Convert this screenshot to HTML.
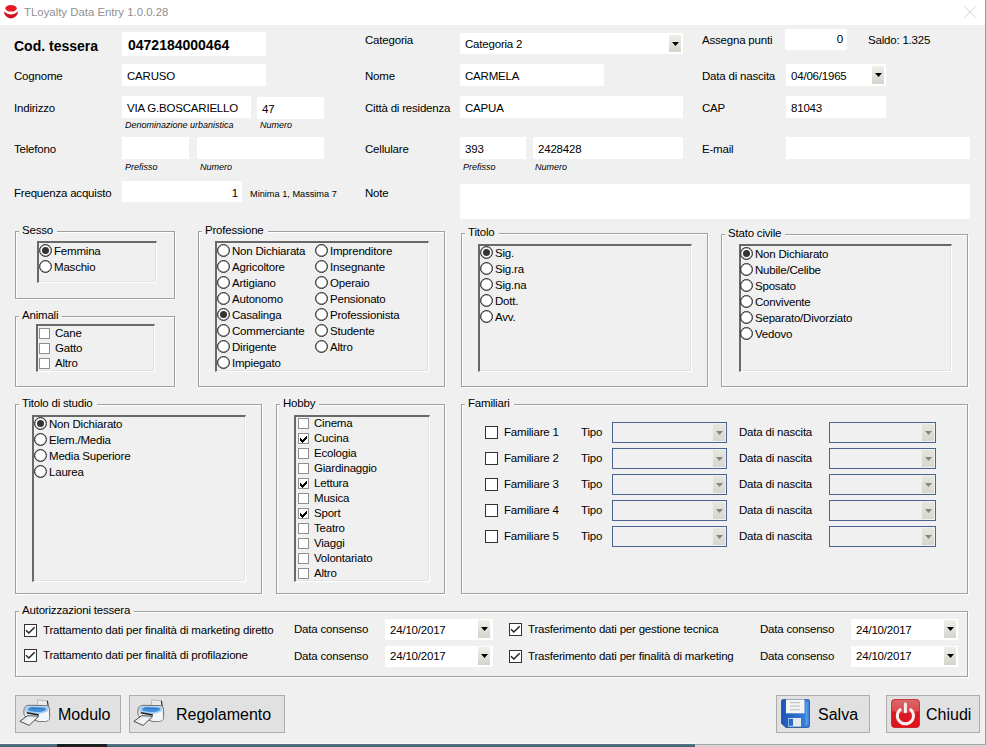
<!DOCTYPE html>
<html><head><meta charset="utf-8">
<style>
*{box-sizing:border-box}
html,body{margin:0;padding:0}
body{width:986px;height:747px;position:relative;overflow:hidden;background:#f0f0f0;font-family:"Liberation Sans",sans-serif;font-size:11.5px;letter-spacing:-0.2px;color:#000}
div,span{position:absolute}
.l{white-space:nowrap;line-height:13px;height:13px}
.tb{background:#fff}
.tb span{left:5px;white-space:nowrap;line-height:13px}
.sm{font-size:9px;font-style:italic;line-height:11px;white-space:nowrap;letter-spacing:0}
.gb{border:1px solid #a0a0a0;box-shadow:1px 1px 0 #fff, inset 1px 1px 0 #fff}
.gl{background:#f0f0f0;white-space:nowrap;line-height:13px;padding:0 4px 0 3px}
.ib{border-top:2px solid #696969;border-left:2px solid #696969;border-right:1px solid #fff;border-bottom:1px solid #fff;box-shadow:inset -1px -1px 0 #e3e3e3}
.rb{width:13px;height:13px;border:1px solid #262626;border-radius:50%;background:#fff;box-shadow:inset 0 0 0 0.5px rgba(0,0,0,0.45)}
.rb.on::after{content:"";position:absolute;left:2px;top:2px;width:7px;height:7px;border-radius:50%;background:#333}
.cb{width:13px;height:13px;border:1px solid #333;background:#fff}
.dd{width:12px;background:linear-gradient(#eeefe9,#d3d5cc)}
.dd::after{content:"";position:absolute;left:3px;top:7px;width:7px;height:4px;background:#000;clip-path:polygon(0 0,100% 0,50% 100%)}
.cb2{width:11px;height:11px;border:1px solid #8f8f8f;background:#fff}
.cb3{width:13px;height:13px;border:1px solid #333;background:#fff}
.cmb{border:1px solid #4a6491;background:#f0f0f0}
.ddd{right:1px;top:1px;width:12px;height:17px;background:linear-gradient(#e4e6df,#d6d8cf)}
.ddd::after{content:"";position:absolute;left:3px;top:7px;width:7px;height:4px;background:#858585;clip-path:polygon(0 0,100% 0,50% 100%)}
.btn{border:1px solid #adadad;background:#e1e1e1;font-size:16px;letter-spacing:0}
.btn span{white-space:nowrap;line-height:19px}
</style></head><body>
<!-- title bar -->
<div style="left:0;top:0;width:986px;height:25px;background:#fff"></div>
<div style="left:985px;top:0;width:1px;height:745px;background:#9a9a9a"></div>
<svg width="14" height="14" viewBox="0 0 14 14" style="position:absolute;left:4px;top:5px">
<ellipse cx="7.05" cy="3.3" rx="5.7" ry="3.3" fill="#e41c22"/>
<path d="M0,6.4 Q7,12.6 14,6.4 A7,7 0 1 1 0,6.4 Z" fill="#d0101c"/>
</svg>
<svg width="12" height="12" style="position:absolute;left:964px;top:6px"><path d="M0.5,0.5 L11.5,11.5 M11.5,0.5 L0.5,11.5" stroke="#d6d6d6" stroke-width="1"/></svg>
<div class="l" style="left:24px;top:6px;font-size:11.4px;letter-spacing:0;color:#8f8f8f">TLoyalty Data Entry 1.0.0.28</div>

<!-- top section labels -->
<div class="l" style="left:14px;top:38px;font-size:14px;letter-spacing:0;font-weight:bold;line-height:16px;height:16px">Cod. tessera</div>
<div class="tb" style="left:122px;top:32px;width:144px;height:24px"><span style="top:5px;left:6px;font-size:14px;letter-spacing:0;font-weight:bold;line-height:16px">0472184000464</span></div>
<div class="l" style="left:14px;top:70px">Cognome</div>
<div class="tb" style="left:122px;top:64px;width:144px;height:22px"><span style="top:6px">CARUSO</span></div>
<div class="l" style="left:14px;top:102px">Indirizzo</div>
<div class="tb" style="left:122px;top:96px;width:129px;height:22px"><span style="top:6px">VIA G.BOSCARIELLO</span></div>
<div class="tb" style="left:257px;top:97px;width:67px;height:22px"><span style="top:6px">47</span></div>
<div class="sm" style="left:125px;top:120px">Denominazione urbanistica</div>
<div class="sm" style="left:260px;top:120px">Numero</div>
<div class="l" style="left:14px;top:143px">Telefono</div>
<div class="tb" style="left:122px;top:137px;width:67px;height:22px"></div>
<div class="tb" style="left:197px;top:137px;width:127px;height:22px"></div>
<div class="sm" style="left:125px;top:162px">Prefisso</div>
<div class="sm" style="left:200px;top:162px">Numero</div>
<div class="l" style="left:14px;top:187px">Frequenza acquisto</div>
<div class="tb" style="left:122px;top:181px;width:120px;height:21px"><span style="top:6px;left:auto;right:4px">1</span></div>
<div class="l" style="left:250px;top:188px;font-size:9.2px;letter-spacing:0">Minima 1, Massima 7</div>

<div class="l" style="left:365px;top:34px">Categoria</div>
<div class="tb" style="left:460px;top:33px;width:223px;height:21px"><span style="top:5px">Categoria 2</span><div class="dd" style="left:209px;top:2px;height:17px"></div></div>
<div class="l" style="left:365px;top:70px">Nome</div>
<div class="tb" style="left:460px;top:64px;width:144px;height:22px"><span style="top:6px">CARMELA</span></div>
<div class="l" style="left:365px;top:102px">Città di residenza</div>
<div class="tb" style="left:460px;top:96px;width:223px;height:22px"><span style="top:6px">CAPUA</span></div>
<div class="l" style="left:365px;top:143px">Cellulare</div>
<div class="tb" style="left:460px;top:137px;width:66px;height:22px"><span style="top:6px">393</span></div>
<div class="tb" style="left:533px;top:137px;width:150px;height:22px"><span style="top:6px">2428428</span></div>
<div class="sm" style="left:463px;top:162px">Prefisso</div>
<div class="sm" style="left:535px;top:162px">Numero</div>
<div class="l" style="left:365px;top:187px">Note</div>
<div class="tb" style="left:460px;top:184px;width:510px;height:35px"></div>

<div class="l" style="left:702px;top:34px">Assegna punti</div>
<div class="tb" style="left:785px;top:29px;width:62px;height:21px"><span style="top:4px;left:auto;right:4px">0</span></div>
<div class="l" style="left:868px;top:34px">Saldo: 1.325</div>
<div class="l" style="left:702px;top:70px">Data di nascita</div>
<div class="tb" style="left:786px;top:64px;width:100px;height:22px"><span style="top:6px">04/06/1965</span><div class="dd" style="left:86px;top:2px;height:18px"></div></div>
<div class="l" style="left:702px;top:102px">CAP</div>
<div class="tb" style="left:786px;top:96px;width:100px;height:22px"><span style="top:6px">81043</span></div>
<div class="l" style="left:702px;top:143px">E-mail</div>
<div class="tb" style="left:786px;top:137px;width:184px;height:22px"></div>

<!-- GROUPS -->
<div class="gb" style="left:15px;top:231px;width:160px;height:68px"></div>
<div class="gl" style="left:19px;top:224px">Sesso</div>
<div class="ib" style="left:37px;top:241px;width:120px;height:42px"></div>
<div class="rb on" style="left:39px;top:244px"></div>
<div class="l" style="left:54px;top:245px">Femmina</div>
<div class="rb" style="left:39px;top:260px"></div>
<div class="l" style="left:54px;top:261px">Maschio</div>
<div class="gb" style="left:15px;top:316px;width:160px;height:71px"></div>
<div class="gl" style="left:19px;top:309px">Animali</div>
<div class="ib" style="left:36px;top:324px;width:119px;height:48px"></div>
<div class="cb2" style="left:39px;top:328px"></div>
<div class="l" style="left:55px;top:327px">Cane</div>
<div class="cb2" style="left:39px;top:343px"></div>
<div class="l" style="left:55px;top:342px">Gatto</div>
<div class="cb2" style="left:39px;top:358px"></div>
<div class="l" style="left:55px;top:357px">Altro</div>
<div class="gb" style="left:198px;top:231px;width:247px;height:156px"></div>
<div class="gl" style="left:202px;top:224px">Professione</div>
<div class="ib" style="left:215px;top:241px;width:214px;height:131px"></div>
<div class="rb" style="left:217px;top:244px"></div>
<div class="l" style="left:232px;top:245px">Non Dichiarata</div>
<div class="rb" style="left:217px;top:260px"></div>
<div class="l" style="left:232px;top:261px">Agricoltore</div>
<div class="rb" style="left:217px;top:276px"></div>
<div class="l" style="left:232px;top:277px">Artigiano</div>
<div class="rb" style="left:217px;top:292px"></div>
<div class="l" style="left:232px;top:293px">Autonomo</div>
<div class="rb on" style="left:217px;top:308px"></div>
<div class="l" style="left:232px;top:309px">Casalinga</div>
<div class="rb" style="left:217px;top:324px"></div>
<div class="l" style="left:232px;top:325px">Commerciante</div>
<div class="rb" style="left:217px;top:340px"></div>
<div class="l" style="left:232px;top:341px">Dirigente</div>
<div class="rb" style="left:217px;top:356px"></div>
<div class="l" style="left:232px;top:357px">Impiegato</div>
<div class="rb" style="left:315px;top:244px"></div>
<div class="l" style="left:330px;top:245px">Imprenditore</div>
<div class="rb" style="left:315px;top:260px"></div>
<div class="l" style="left:330px;top:261px">Insegnante</div>
<div class="rb" style="left:315px;top:276px"></div>
<div class="l" style="left:330px;top:277px">Operaio</div>
<div class="rb" style="left:315px;top:292px"></div>
<div class="l" style="left:330px;top:293px">Pensionato</div>
<div class="rb" style="left:315px;top:308px"></div>
<div class="l" style="left:330px;top:309px">Professionista</div>
<div class="rb" style="left:315px;top:324px"></div>
<div class="l" style="left:330px;top:325px">Studente</div>
<div class="rb" style="left:315px;top:340px"></div>
<div class="l" style="left:330px;top:341px">Altro</div>
<div class="gb" style="left:461px;top:233px;width:247px;height:154px"></div>
<div class="gl" style="left:465px;top:226px">Titolo</div>
<div class="ib" style="left:478px;top:244px;width:214px;height:128px"></div>
<div class="rb on" style="left:480px;top:246px"></div>
<div class="l" style="left:495px;top:247px">Sig.</div>
<div class="rb" style="left:480px;top:262px"></div>
<div class="l" style="left:495px;top:263px">Sig.ra</div>
<div class="rb" style="left:480px;top:278px"></div>
<div class="l" style="left:495px;top:279px">Sig.na</div>
<div class="rb" style="left:480px;top:294px"></div>
<div class="l" style="left:495px;top:295px">Dott.</div>
<div class="rb" style="left:480px;top:310px"></div>
<div class="l" style="left:495px;top:311px">Avv.</div>
<div class="gb" style="left:721px;top:234px;width:247px;height:153px"></div>
<div class="gl" style="left:725px;top:227px">Stato civile</div>
<div class="ib" style="left:739px;top:244px;width:213px;height:128px"></div>
<div class="rb on" style="left:740px;top:247px"></div>
<div class="l" style="left:755px;top:248px">Non Dichiarato</div>
<div class="rb" style="left:740px;top:263px"></div>
<div class="l" style="left:755px;top:264px">Nubile/Celibe</div>
<div class="rb" style="left:740px;top:279px"></div>
<div class="l" style="left:755px;top:280px">Sposato</div>
<div class="rb" style="left:740px;top:295px"></div>
<div class="l" style="left:755px;top:296px">Convivente</div>
<div class="rb" style="left:740px;top:311px"></div>
<div class="l" style="left:755px;top:312px">Separato/Divorziato</div>
<div class="rb" style="left:740px;top:327px"></div>
<div class="l" style="left:755px;top:328px">Vedovo</div>
<div class="gb" style="left:15px;top:404px;width:247px;height:190px"></div>
<div class="gl" style="left:19px;top:397px">Titolo di studio</div>
<div class="ib" style="left:32px;top:415px;width:214px;height:167px"></div>
<div class="rb on" style="left:34px;top:417px"></div>
<div class="l" style="left:49px;top:418px">Non Dichiarato</div>
<div class="rb" style="left:34px;top:433px"></div>
<div class="l" style="left:49px;top:434px">Elem./Media</div>
<div class="rb" style="left:34px;top:449px"></div>
<div class="l" style="left:49px;top:450px">Media Superiore</div>
<div class="rb" style="left:34px;top:465px"></div>
<div class="l" style="left:49px;top:466px">Laurea</div>
<div class="gb" style="left:276px;top:404px;width:169px;height:190px"></div>
<div class="gl" style="left:280px;top:397px">Hobby</div>
<div class="ib" style="left:294px;top:415px;width:136px;height:167px"></div>
<div class="cb2" style="left:298px;top:418px"></div>
<div class="l" style="left:314px;top:417px">Cinema</div>
<div class="cb2" style="left:298px;top:433px"><svg width="7" height="7" style="position:absolute;left:1px;top:2px" shape-rendering="crispEdges"><path d="M6 0h1v1h-1zM5 1h2v1h-2zM0 2h1v1h-1zM4 2h3v1h-3zM0 3h2v1h-2zM3 3h3v1h-3zM0 4h5v1h-5zM1 5h3v1h-3zM2 6h1v1h-1z" fill="#000"/></svg></div>
<div class="l" style="left:314px;top:432px">Cucina</div>
<div class="cb2" style="left:298px;top:448px"></div>
<div class="l" style="left:314px;top:447px">Ecologia</div>
<div class="cb2" style="left:298px;top:463px"></div>
<div class="l" style="left:314px;top:462px">Giardinaggio</div>
<div class="cb2" style="left:298px;top:478px"><svg width="7" height="7" style="position:absolute;left:1px;top:2px" shape-rendering="crispEdges"><path d="M6 0h1v1h-1zM5 1h2v1h-2zM0 2h1v1h-1zM4 2h3v1h-3zM0 3h2v1h-2zM3 3h3v1h-3zM0 4h5v1h-5zM1 5h3v1h-3zM2 6h1v1h-1z" fill="#000"/></svg></div>
<div class="l" style="left:314px;top:477px">Lettura</div>
<div class="cb2" style="left:298px;top:493px"></div>
<div class="l" style="left:314px;top:492px">Musica</div>
<div class="cb2" style="left:298px;top:508px"><svg width="7" height="7" style="position:absolute;left:1px;top:2px" shape-rendering="crispEdges"><path d="M6 0h1v1h-1zM5 1h2v1h-2zM0 2h1v1h-1zM4 2h3v1h-3zM0 3h2v1h-2zM3 3h3v1h-3zM0 4h5v1h-5zM1 5h3v1h-3zM2 6h1v1h-1z" fill="#000"/></svg></div>
<div class="l" style="left:314px;top:507px">Sport</div>
<div class="cb2" style="left:298px;top:523px"></div>
<div class="l" style="left:314px;top:522px">Teatro</div>
<div class="cb2" style="left:298px;top:538px"></div>
<div class="l" style="left:314px;top:537px">Viaggi</div>
<div class="cb2" style="left:298px;top:553px"></div>
<div class="l" style="left:314px;top:552px">Volontariato</div>
<div class="cb2" style="left:298px;top:568px"></div>
<div class="l" style="left:314px;top:567px">Altro</div>
<div class="gb" style="left:461px;top:404px;width:507px;height:190px"></div>
<div class="gl" style="left:465px;top:397px">Familiari</div>
<div class="cb" style="left:485px;top:426px"></div>
<div class="l" style="left:504px;top:426px">Familiare 1</div>
<div class="l" style="left:581px;top:426px">Tipo</div>
<div class="cmb" style="left:612px;top:422px;width:115px;height:21px"><div class="ddd"></div></div>
<div class="l" style="left:739px;top:426px">Data di nascita</div>
<div class="cmb" style="left:829px;top:422px;width:107px;height:21px"><div class="ddd"></div></div>
<div class="cb" style="left:485px;top:452px"></div>
<div class="l" style="left:504px;top:452px">Familiare 2</div>
<div class="l" style="left:581px;top:452px">Tipo</div>
<div class="cmb" style="left:612px;top:448px;width:115px;height:21px"><div class="ddd"></div></div>
<div class="l" style="left:739px;top:452px">Data di nascita</div>
<div class="cmb" style="left:829px;top:448px;width:107px;height:21px"><div class="ddd"></div></div>
<div class="cb" style="left:485px;top:478px"></div>
<div class="l" style="left:504px;top:478px">Familiare 3</div>
<div class="l" style="left:581px;top:478px">Tipo</div>
<div class="cmb" style="left:612px;top:474px;width:115px;height:21px"><div class="ddd"></div></div>
<div class="l" style="left:739px;top:478px">Data di nascita</div>
<div class="cmb" style="left:829px;top:474px;width:107px;height:21px"><div class="ddd"></div></div>
<div class="cb" style="left:485px;top:504px"></div>
<div class="l" style="left:504px;top:504px">Familiare 4</div>
<div class="l" style="left:581px;top:504px">Tipo</div>
<div class="cmb" style="left:612px;top:500px;width:115px;height:21px"><div class="ddd"></div></div>
<div class="l" style="left:739px;top:504px">Data di nascita</div>
<div class="cmb" style="left:829px;top:500px;width:107px;height:21px"><div class="ddd"></div></div>
<div class="cb" style="left:485px;top:530px"></div>
<div class="l" style="left:504px;top:530px">Familiare 5</div>
<div class="l" style="left:581px;top:530px">Tipo</div>
<div class="cmb" style="left:612px;top:526px;width:115px;height:21px"><div class="ddd"></div></div>
<div class="l" style="left:739px;top:530px">Data di nascita</div>
<div class="cmb" style="left:829px;top:526px;width:107px;height:21px"><div class="ddd"></div></div>
<div class="gb" style="left:15px;top:611px;width:953px;height:66px"></div>
<div class="gl" style="left:19px;top:604px">Autorizzazioni tessera</div>
<div class="cb3" style="left:24px;top:624px"><svg width="13" height="13" style="position:absolute;left:-1px;top:-1px"><polyline points="2,6.3 4.8,9 10.7,3.2" fill="none" stroke="#222" stroke-width="1.5"/></svg></div>
<div class="l" style="left:43px;top:624px">Trattamento dati per finalità di marketing diretto</div>
<div class="l" style="left:294px;top:623px">Data consenso</div>
<div class="tb" style="left:385px;top:619px;width:108px;height:21px"><span style="top:5px">24/10/2017</span><div class="dd" style="left:93px;top:1px;height:18px"></div></div>
<div class="cb3" style="left:509px;top:623px"><svg width="13" height="13" style="position:absolute;left:-1px;top:-1px"><polyline points="2,6.3 4.8,9 10.7,3.2" fill="none" stroke="#222" stroke-width="1.5"/></svg></div>
<div class="l" style="left:528px;top:623px">Trasferimento dati per gestione tecnica</div>
<div class="l" style="left:760px;top:623px">Data consenso</div>
<div class="tb" style="left:851px;top:619px;width:107px;height:21px"><span style="top:5px">24/10/2017</span><div class="dd" style="left:93px;top:1px;height:18px"></div></div>
<div class="cb3" style="left:24px;top:649px"><svg width="13" height="13" style="position:absolute;left:-1px;top:-1px"><polyline points="2,6.3 4.8,9 10.7,3.2" fill="none" stroke="#222" stroke-width="1.5"/></svg></div>
<div class="l" style="left:43px;top:649px">Trattamento dati per finalità di profilazione</div>
<div class="l" style="left:294px;top:650px">Data consenso</div>
<div class="tb" style="left:385px;top:646px;width:108px;height:21px"><span style="top:4px">24/10/2017</span><div class="dd" style="left:93px;top:1px;height:18px"></div></div>
<div class="cb3" style="left:509px;top:650px"><svg width="13" height="13" style="position:absolute;left:-1px;top:-1px"><polyline points="2,6.3 4.8,9 10.7,3.2" fill="none" stroke="#222" stroke-width="1.5"/></svg></div>
<div class="l" style="left:528px;top:650px">Trasferimento dati per finalità di marketing</div>
<div class="l" style="left:760px;top:650px">Data consenso</div>
<div class="tb" style="left:851px;top:646px;width:107px;height:21px"><span style="top:4px">24/10/2017</span><div class="dd" style="left:93px;top:1px;height:18px"></div></div>
<div class="btn" style="left:15px;top:695px;width:106px;height:38px"><svg width="36" height="32" viewBox="0 0 36 32" style="position:absolute;left:1px;top:0.5px">
<polygon points="20.6,2.9 30.4,3.8 31.2,9.8 20.2,9.2" fill="#e9e9e9" stroke="#9a9a9a" stroke-width="0.6"/>
<path d="M30.4,3.8 L31.2,9.8" stroke="#2a2a2a" stroke-width="1.1"/>
<path d="M6.9,13.5 C6.9,10.2 8.8,8.6 12,8.3 L29,8.6 C31.5,8.8 32.6,10.2 32.6,12.5 L32.6,20.5 C32.6,23 30.6,24.4 27.5,24.4 L21,24.4 L8,19.3 C7.2,18.3 6.9,17 6.9,15 Z" fill="#e6eaee" stroke="#505050" stroke-width="0.8"/>
<path d="M8,11.8 C8.8,9.6 11,8.9 13.5,8.9 L29,9.4 C31,9.7 32,10.8 31.4,12.6 L30.2,14.8 C28.6,16.4 25,17 21,17 L12,16 C9.4,15.4 7.8,13.8 8,11.8 Z" fill="#a4cff2"/>
<path d="M11,12 C12,10.2 15,10 18,10 L27,10.4 C29,10.7 29.5,11.8 28.6,13 C27.2,14.8 23,15.2 19,15 C14,14.6 10.4,13.6 11,12 Z" fill="#4592dc"/>
<path d="M13,11.6 L26.5,12" stroke="#2a6cb8" stroke-width="0.8"/>
<path d="M21.5,17.6 L31.4,14.2 L32.2,20.5 C32.2,22.8 30.4,23.9 27.5,23.9 L21.5,23.9 Z" fill="#f4f7fa"/>
<path d="M9.8,15.8 L21.8,18" stroke="#1c1c1c" stroke-width="1.5"/>
<polygon points="2.9,24.3 10.6,18.7 21.6,19.3 12.1,28.4" fill="#f1f4f6" stroke="#3a3a3a" stroke-width="0.9"/>
<path d="M5.8,24.4 L12.2,20 L20.2,20.4" fill="none" stroke="#cdd2d6" stroke-width="0.7"/>
</svg><span style="left:42px;top:9px">Modulo</span></div>
<div class="btn" style="left:129px;top:695px;width:156px;height:38px"><svg width="36" height="32" viewBox="0 0 36 32" style="position:absolute;left:1px;top:0.5px">
<polygon points="20.6,2.9 30.4,3.8 31.2,9.8 20.2,9.2" fill="#e9e9e9" stroke="#9a9a9a" stroke-width="0.6"/>
<path d="M30.4,3.8 L31.2,9.8" stroke="#2a2a2a" stroke-width="1.1"/>
<path d="M6.9,13.5 C6.9,10.2 8.8,8.6 12,8.3 L29,8.6 C31.5,8.8 32.6,10.2 32.6,12.5 L32.6,20.5 C32.6,23 30.6,24.4 27.5,24.4 L21,24.4 L8,19.3 C7.2,18.3 6.9,17 6.9,15 Z" fill="#e6eaee" stroke="#505050" stroke-width="0.8"/>
<path d="M8,11.8 C8.8,9.6 11,8.9 13.5,8.9 L29,9.4 C31,9.7 32,10.8 31.4,12.6 L30.2,14.8 C28.6,16.4 25,17 21,17 L12,16 C9.4,15.4 7.8,13.8 8,11.8 Z" fill="#a4cff2"/>
<path d="M11,12 C12,10.2 15,10 18,10 L27,10.4 C29,10.7 29.5,11.8 28.6,13 C27.2,14.8 23,15.2 19,15 C14,14.6 10.4,13.6 11,12 Z" fill="#4592dc"/>
<path d="M13,11.6 L26.5,12" stroke="#2a6cb8" stroke-width="0.8"/>
<path d="M21.5,17.6 L31.4,14.2 L32.2,20.5 C32.2,22.8 30.4,23.9 27.5,23.9 L21.5,23.9 Z" fill="#f4f7fa"/>
<path d="M9.8,15.8 L21.8,18" stroke="#1c1c1c" stroke-width="1.5"/>
<polygon points="2.9,24.3 10.6,18.7 21.6,19.3 12.1,28.4" fill="#f1f4f6" stroke="#3a3a3a" stroke-width="0.9"/>
<path d="M5.8,24.4 L12.2,20 L20.2,20.4" fill="none" stroke="#cdd2d6" stroke-width="0.7"/>
</svg><span style="left:46px;top:9px">Regolamento</span></div>
<div class="btn" style="left:776px;top:695px;width:94px;height:38px"><svg width="29" height="29" viewBox="0 0 29 29" style="position:absolute;left:4px;top:3px">
<defs><linearGradient id="fg" x1="0" x2="1" y1="0" y2="0"><stop offset="0" stop-color="#1b56b8"/><stop offset="1" stop-color="#3b86dc"/></linearGradient></defs>
<path d="M2.5,0.4 H26.5 Q28.6,0.4 28.6,2.5 V26.5 Q28.6,28.6 26.5,28.6 H5 L0.4,24.3 V2.5 Q0.4,0.4 2.5,0.4 Z" fill="url(#fg)" stroke="#1a4690" stroke-width="0.8"/>
<rect x="5" y="0.5" width="18.5" height="13.8" fill="#f4f4f4"/>
<rect x="9" y="3" width="10" height="1.2" fill="#c4c4c4"/>
<rect x="9" y="6.5" width="10" height="1.2" fill="#c4c4c4"/>
<rect x="9" y="10" width="10" height="1.2" fill="#c4c4c4"/>
<rect x="24.5" y="3" width="2" height="23" fill="#6aa8ec" opacity="0.7"/>
<rect x="7.2" y="19" width="12.8" height="8.6" fill="#e6e9ec"/>
<rect x="7.7" y="19.8" width="4.3" height="7" fill="#2a6cc4"/>
</svg><span style="left:41px;top:9px">Salva</span></div>
<div class="btn" style="left:886px;top:695px;width:94px;height:38px"><svg width="29" height="29" viewBox="0 0 29 29" style="position:absolute;left:4px;top:3px">
<defs><linearGradient id="pg" x1="0" x2="0" y1="0" y2="1"><stop offset="0" stop-color="#d24848"/><stop offset="0.45" stop-color="#d81c24"/><stop offset="1" stop-color="#e4101a"/></linearGradient></defs>
<rect x="0.3" y="0.3" width="28.4" height="28.4" rx="4" fill="url(#pg)" stroke="#b00c14" stroke-width="0.6"/>
<path d="M1,4 Q1,1 4,1 H25 Q28,1 28,4 V12 Q14,16 1,12 Z" fill="#ffffff" opacity="0.18"/>
<path d="M18.7,9.9 A8.1,8.1 0 1 1 10.1,9.9" fill="none" stroke="#f8eeee" stroke-width="3"/>
<rect x="12.9" y="3.6" width="3" height="10.7" rx="1.2" fill="#f8eeee"/>
</svg><span style="left:39px;top:9px">Chiudi</span></div>
<div style="left:0;top:743px;width:695px;height:1px;background:#f8fafa"></div>
<div style="left:0;top:744px;width:695px;height:3px;background:linear-gradient(#55788a,#41606e)"></div>
<div style="left:57px;top:744px;width:50px;height:3px;background:#1c1f20"></div>
<div style="left:695px;top:744px;width:291px;height:1px;background:#a8a8a8"></div>
<div style="left:695px;top:745px;width:291px;height:2px;background:#d4d4d4"></div>


</body></html>
